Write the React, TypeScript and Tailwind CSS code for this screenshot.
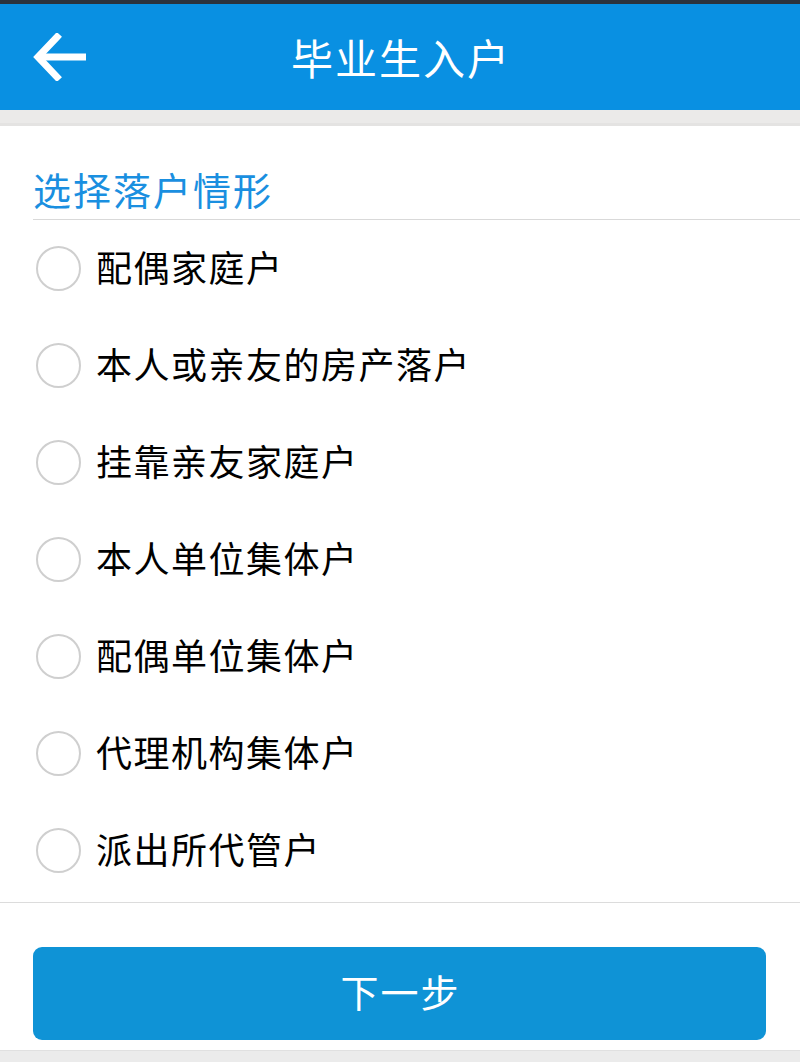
import React from "react";

const items = [
  "配偶家庭户",
  "本人或亲友的房产落户",
  "挂靠亲友家庭户",
  "本人单位集体户",
  "配偶单位集体户",
  "代理机构集体户",
  "派出所代管户",
];

export default function App() {
  return (
    <div
      className="w-[800px] h-[1062px] bg-white flex flex-col overflow-hidden"
      style={{ fontFamily: '"Noto Sans CJK SC", "Noto Sans", sans-serif' }}
    >
      <div className="h-[4px] bg-[#2b333d]" />
      <div className="h-[106px] bg-[#0990e2] grid grid-cols-[1fr_auto_1fr] items-center">
        <div className="pl-[33px] flex items-center">
          <svg width="56" height="48" viewBox="0 0 56 48" fill="none">
            <path d="M24 4 L5 24 L24 44" stroke="white" strokeWidth="7" strokeLinecap="square" strokeLinejoin="miter" />
            <path d="M6 24 H53" stroke="white" strokeWidth="7" />
          </svg>
        </div>
        <div className="text-white text-[42px] leading-[42px] tracking-[2px] pl-[2px]">毕业生入户</div>
        <div />
      </div>
      <div className="h-[16px] bg-[#ebeae9] border-b-[3px] border-[#e4e3e2]" />
      <div className="h-[93px] pt-[44px] pl-[33px]">
        <div className="text-[#1a8fe0] text-[38px] leading-[38px] tracking-[2px]">选择落户情形</div>
      </div>
      <div className="ml-[33px] h-px bg-[#d9d9d9]" />
      <div className="flex flex-col pb-[3px]">
        {items.map((t) => (
          <div key={t} className="h-[97px] flex items-center pl-[36px]">
            <div className="w-[45px] h-[45px] rounded-full border-2 border-[#cfcfcf] bg-white shrink-0" />
            <div className="ml-[15px] pb-[6px] text-[36px] leading-[36px] text-black tracking-[1.5px]">{t}</div>
          </div>
        ))}
      </div>
      <div className="h-px bg-[#dcdcdc]" />
      <div className="pt-[44px] px-[33px] pb-[10px]">
        <div className="h-[93px] w-[733px] rounded-[9px] bg-[#0f93d6] flex items-center justify-center text-white text-[38px] leading-[38px] tracking-[2px] pb-[6px] pl-[2px]">
          下一步
        </div>
      </div>
      <div className="flex-1 bg-[#ebebeb] border-t border-[#e0e0e0]" />
    </div>
  );
}
